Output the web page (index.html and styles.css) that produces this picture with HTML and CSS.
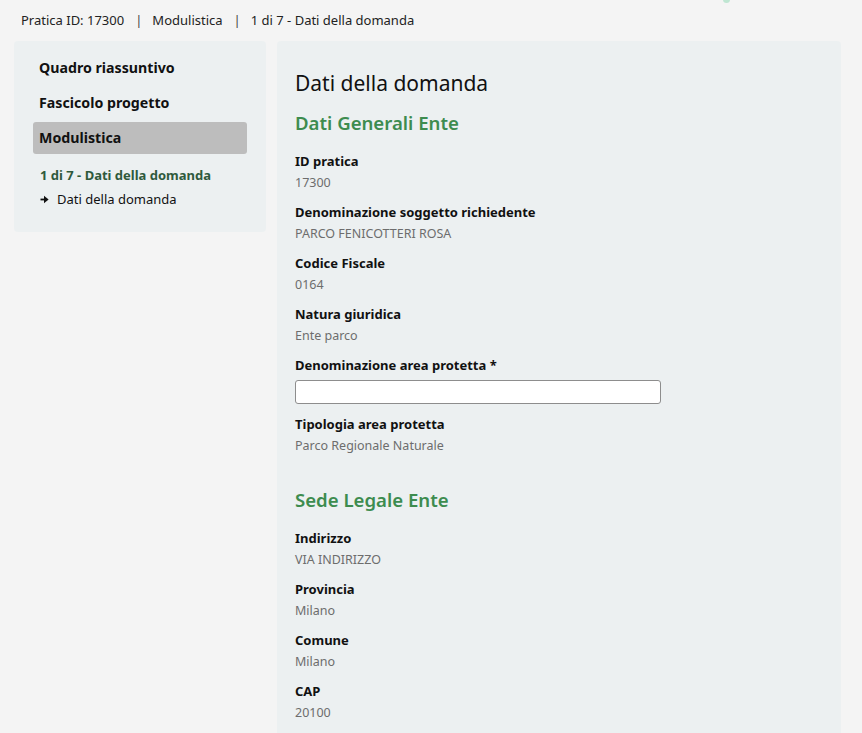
FILE: index.html
```html
<!DOCTYPE html>
<html lang="it">
<head>
<meta charset="utf-8">
<title>Dati della domanda</title>
<link rel="stylesheet" href="styles.css">
</head>
<body>
<div class="page">
  <div class="topmark"></div>
  <div class="crumb">
    <span>Pratica ID: 17300</span><span class="sep">|</span><span>Modulistica</span><span class="sep">|</span><span>1 di 7 - Dati della domanda</span>
  </div>
  <div class="layout">
    <aside class="side">
      <a class="nav">Quadro riassuntivo</a>
      <a class="nav">Fascicolo progetto</a>
      <a class="nav active">Modulistica</a>
      <div class="step">1 di 7 - Dati della domanda</div>
      <div class="sub">
        <svg class="arrow" width="9" height="9" viewBox="0 0 9 9"><path d="M0.5 4.5H5" fill="none" stroke="#111" stroke-width="1.8"/><path d="M4 0.8L8.6 4.5L4 8.2Z" fill="#111"/></svg>
        <span>Dati della domanda</span>
      </div>
    </aside>
    <main class="main">
      <h1 class="title">Dati della domanda</h1>
      <h2 class="section">Dati Generali Ente</h2>
      <div class="field"><div class="label">ID pratica</div><div class="value">17300</div></div>
      <div class="field"><div class="label">Denominazione soggetto richiedente</div><div class="value">PARCO FENICOTTERI ROSA</div></div>
      <div class="field"><div class="label">Codice Fiscale</div><div class="value">0164</div></div>
      <div class="field"><div class="label">Natura giuridica</div><div class="value">Ente parco</div></div>
      <div class="field"><div class="label">Denominazione area protetta *</div><input class="input" type="text"></div>
      <div class="field"><div class="label">Tipologia area protetta</div><div class="value">Parco Regionale Naturale</div></div>
      <h2 class="section second">Sede Legale Ente</h2>
      <div class="field"><div class="label">Indirizzo</div><div class="value">VIA INDIRIZZO</div></div>
      <div class="field"><div class="label">Provincia</div><div class="value">Milano</div></div>
      <div class="field"><div class="label">Comune</div><div class="value">Milano</div></div>
      <div class="field"><div class="label">CAP</div><div class="value">20100</div></div>
    </main>
  </div>
</div>
</body>
</html>
```

FILE: styles.css
```css
html, body {
  margin: 0;
  padding: 0;
  background: #f4f4f4;
  height: 100%;
  overflow: hidden;
}
body {
  font-family: "Noto Sans", "DejaVu Sans", sans-serif;
  color: #111;
}
.page {
  position: relative;
  width: 862px;
}
.topmark {
  position: absolute;
  left: 723px;
  top: -4px;
  width: 7px;
  height: 7px;
  border-radius: 50%;
  background: #bfe6d2;
}
.crumb {
  padding: 11px 0 0 21px;
  height: 30px;
  box-sizing: border-box;
  font-size: 13px;
  line-height: 18px;
  color: #222;
}
.crumb .sep {
  margin: 0 10px 0 11px;
  color: #444;
}
.layout {
  display: flex;
  align-items: flex-start;
  gap: 11px;
  padding: 11px 0 0 14px;
}
.side {
  width: 252px;
  box-sizing: border-box;
  background: #ecf0f1;
  border-radius: 4px;
  padding: 11px 19px 24px 19px;
  display: flex;
  flex-direction: column;
}
.nav {
  display: block;
  font-size: 14.2px;
  font-weight: 700;
  line-height: 32px;
  height: 32px;
  padding: 0 6px;
  margin-bottom: 3px;
  border-radius: 3px;
  color: #111;
}
.nav.active {
  background: #bdbdbd;
}
.step {
  margin-top: 9px;
  padding-left: 7px;
  font-size: 13px;
  font-weight: 700;
  color: #2f5a3c;
  line-height: 18px;
}
.sub {
  margin-top: 6px;
  padding-left: 7px;
  display: flex;
  align-items: center;
  gap: 8px;
  font-size: 13px;
  line-height: 18px;
}
.main {
  width: 564px;
  min-height: 700px;
  box-sizing: border-box;
  background: #ecf0f1;
  border-radius: 4px 4px 0 0;
  padding: 26px 18px 0 18px;
}
.title {
  margin: 0;
  font-size: 21px;
  font-weight: 400;
  line-height: 32px;
}
.section {
  margin: 10px 0 15px;
  font-size: 18.6px;
  font-weight: 600;
  line-height: 28px;
  color: #3d8c4f;
}
.section.second {
  margin-top: 31px;
}
.field {
  margin-bottom: 11px;
}
.label {
  font-size: 13px;
  font-weight: 700;
  line-height: 18px;
}
.value {
  margin-top: 4px;
  font-size: 12.5px;
  line-height: 18px;
  color: #6d6d6d;
}
.input {
  display: block;
  margin: 6px 0 4px;
  width: 366px;
  height: 24px;
  box-sizing: border-box;
  border: 1px solid #8d8d8d;
  border-radius: 3px;
  background: #fff;
}
```
